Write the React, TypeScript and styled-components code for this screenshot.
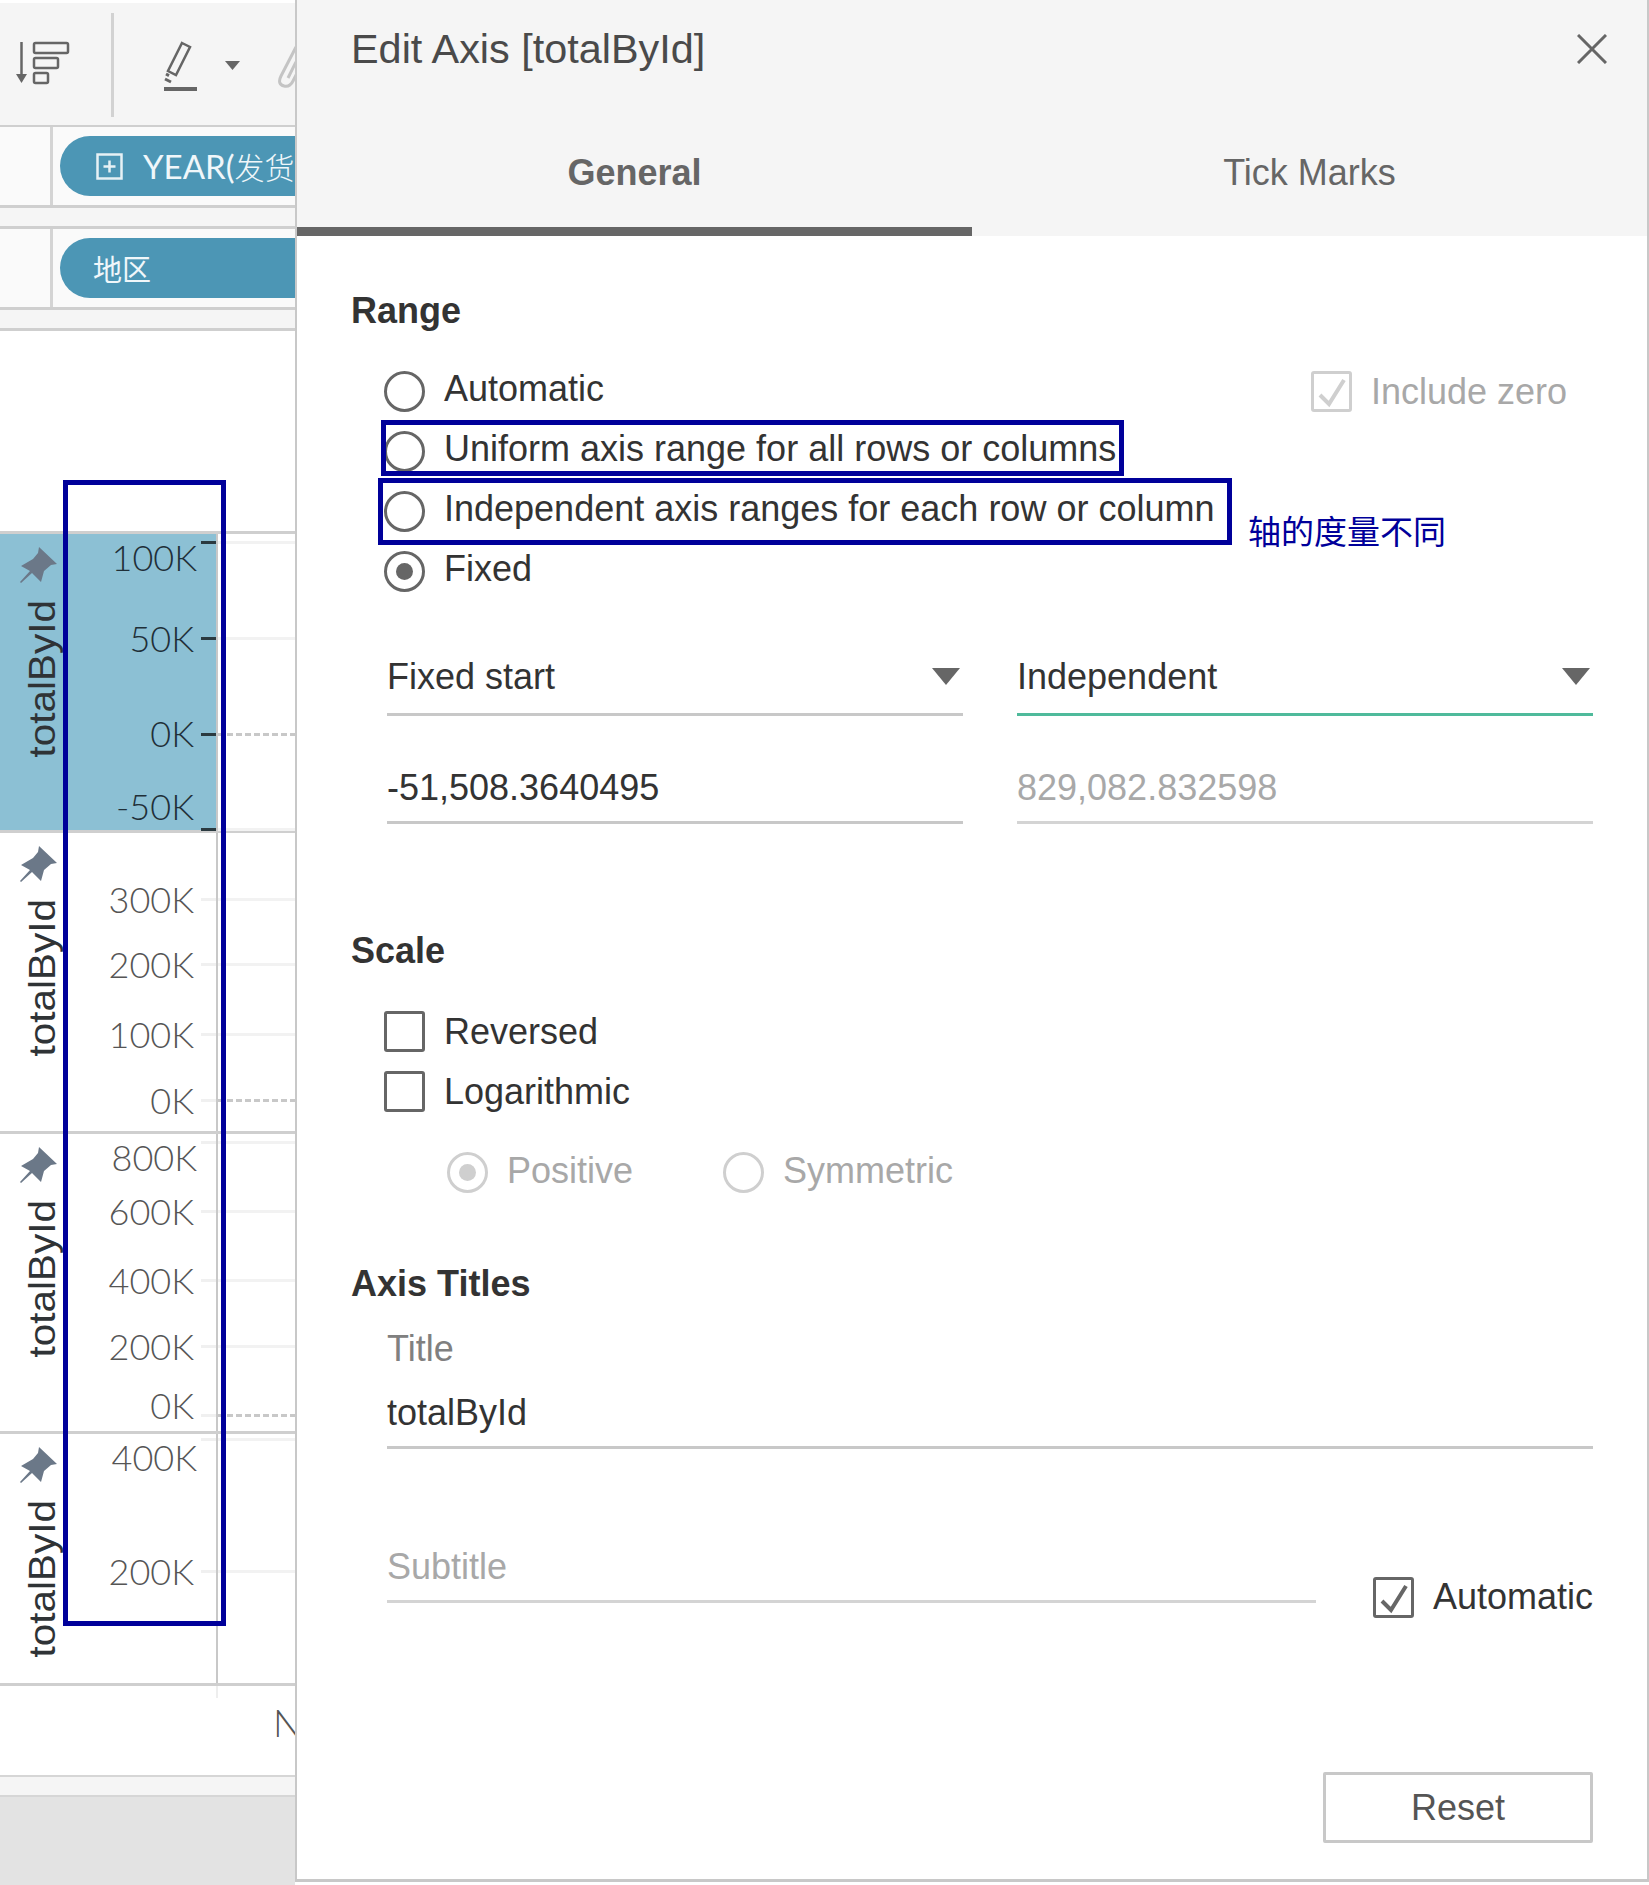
import React from "react";
import styled, { createGlobalStyle } from "styled-components";

const GlobalStyle = createGlobalStyle`
  html, body {
    margin: 0;
    padding: 0;
    background: white;
  }
  * {
    box-sizing: border-box;
  }
`;

const LINE = "#cfcfcf";
const NAVY = "#00009a";

const axisRows = [
  {
    height: 299,
    selected: true,
    ticks: [
      { label: "100K", center: 23, right: 98, line: 7 },
      { label: "50K", center: 104, right: 101, line: 103 },
      { label: "0K", center: 199, right: 101, line: 199, zero: true },
      { label: "-50K", center: 272, right: 101, line: 294 },
    ],
  },
  {
    height: 301,
    ticks: [
      { label: "300K", center: 66, right: 101, line: 65 },
      { label: "200K", center: 131, right: 101, line: 130 },
      { label: "100K", center: 201, right: 101, line: 200 },
      { label: "0K", center: 267, right: 101, line: 266, zero: true },
    ],
  },
  {
    height: 300,
    ticks: [
      { label: "800K", center: 23, right: 98, line: 7 },
      { label: "600K", center: 77, right: 101, line: 76 },
      { label: "400K", center: 146, right: 101, line: 145 },
      { label: "200K", center: 212, right: 101, line: 211 },
      { label: "0K", center: 271, right: 101, line: 280, zero: true },
    ],
  },
  {
    height: 252,
    ticks: [
      { label: "400K", center: 23, right: 98, line: 4 },
      { label: "200K", center: 137, right: 101, line: 136 },
    ],
  },
];

function SortIcon() {
  return (
    <ToolIcon width="52" height="122" viewBox="16 3 52 122">
      <path d="M21.5 42V78" stroke="#666" strokeWidth="2.5" />
      <path d="M16 74h11l-5.5 9z" fill="#666" />
      <g fill="none" stroke="#666" strokeWidth="2.5">
        <rect x="34" y="43" width="34" height="10" rx="1.5" />
        <rect x="34" y="58" width="24" height="10" rx="1.5" />
        <rect x="34" y="73" width="14" height="10" rx="1.5" />
      </g>
    </ToolIcon>
  );
}

function PencilIcon() {
  return (
    <ToolIcon width="33" height="122" viewBox="164 3 33 122">
      <path d="M182 43l8 4-14 28-8-4z" fill="none" stroke="#666" strokeWidth="2.5" />
      <path d="M166 74l3 1.6M165 79l6 3" stroke="#666" strokeWidth="3" />
      <path d="M164 89h33" stroke="#666" strokeWidth="4" />
    </ToolIcon>
  );
}

function CaretIcon() {
  return (
    <ToolIcon width="15" height="122" viewBox="225 3 15 122">
      <path d="M225 61h15l-7.5 9z" fill="#666" />
    </ToolIcon>
  );
}

function ClipIcon() {
  return (
    <ToolIcon width="30" height="122" viewBox="278 3 30 122">
      <path
        d="M296 47L281 76c-3 6-1 9 3 10 4 1 7-1 9-5l8-16M296 62l-8 16"
        fill="none"
        stroke="#c4c4c4"
        strokeWidth="3"
      />
    </ToolIcon>
  );
}

function PlusBox() {
  return (
    <svg width="27" height="27" viewBox="0 0 27 27">
      <rect x="1.5" y="1.5" width="24" height="24" fill="none" stroke="#e6f1f5" strokeWidth="2.5" />
      <path d="M13.5 7.5v12M7.5 13.5h12" stroke="#e6f1f5" strokeWidth="2.5" />
    </svg>
  );
}

function PinIcon() {
  return (
    <svg width="37" height="36" viewBox="0 0 37 36">
      <path
        d="M19 0L37 17l-6 1-7 6-3 11-9-9L1 36l-1-1 10-11-9-5 12-7 5-6z"
        fill="#6b7888"
      />
    </svg>
  );
}

function CheckMark({ color }: { color: string }) {
  return (
    <svg width="35" height="35" viewBox="0 0 35 35">
      <path d="M6 21l9 9L30 6" fill="none" stroke={color} strokeWidth="4" />
    </svg>
  );
}

function CloseIcon() {
  return (
    <svg width="30" height="30" viewBox="0 0 30 30">
      <path d="M1 1l28 28M29 1L1 29" stroke="#666" strokeWidth="3" />
    </svg>
  );
}

function AxisRowView({ row }: { row: (typeof axisRows)[number] }) {
  return (
    <AxisRow $selected={row.selected} style={{ height: row.height }}>
      <Gutter>
        <PinIcon />
        <AxisTitle>totalById</AxisTitle>
      </Gutter>
      {row.ticks.map((tick) => (
        <React.Fragment key={tick.label + tick.center}>
          <TickLabel
            $selected={row.selected}
            style={{ top: tick.center - 20, right: tick.right }}
          >
            {tick.label}
          </TickLabel>
          <TickMark $selected={row.selected} style={{ top: tick.line }} />
          <GridLine $zero={tick.zero} style={{ top: tick.line }} />
        </React.Fragment>
      ))}
    </AxisRow>
  );
}

export default function App() {
  return (
    <Page>
      <GlobalStyle />
      <LeftPane>
        <Toolbar>
          <SortIcon />
          <ToolDivider />
          <PencilIcon />
          <CaretIcon />
          <ClipIcon />
        </Toolbar>
        <ShelfRow>
          <ShelfLabel />
          <Pill $inset={36} $size={33}>
            <PlusBox />
            <span>
              YEAR(<PillCjk>发货</PillCjk>
            </span>
          </Pill>
        </ShelfRow>
        <ShelfBand />
        <ShelfRow>
          <ShelfLabel />
          <Pill $inset={33} $size={29}>
            地区
          </Pill>
        </ShelfRow>
        <ShelfBand />
        <ChartHead />
        {axisRows.map((row, i) => (
          <AxisRowView key={i} row={row} />
        ))}
        <DateRow>N</DateRow>
        <ScrollBand />
        <GreyFill />
        <AxisHighlight />
      </LeftPane>

      <Panel>
        <PanelHead>
          <TitleBar>
            <PanelTitle>Edit Axis [totalById]</PanelTitle>
            <CloseIcon />
          </TitleBar>
          <Tabs>
            <Tab $active>General</Tab>
            <Tab>Tick Marks</Tab>
          </Tabs>
        </PanelHead>

        <PanelBody>
          <RangeHeading>Range</RangeHeading>
          <OptionGroup>
            <OptionRow>
              <Option>
                <Radio />
                <OptionText $nudge={-2}>Automatic</OptionText>
              </Option>
              <Option $muted>
                <CheckBox $muted>
                  <CheckMark color="#cfcfcf" />
                </CheckBox>
                <OptionText $nudge={1}>Include zero</OptionText>
              </Option>
            </OptionRow>
            <OptionRow>
              <Option>
                <Radio />
                <OptionText $nudge={-2}>Uniform axis range for all rows or columns</OptionText>
              </Option>
              <Highlight $left={-3} $top={-1} $width={743} $height={56} />
            </OptionRow>
            <OptionRow>
              <Option>
                <Radio />
                <OptionText $nudge={-2}>Independent axis ranges for each row or column</OptionText>
              </Option>
              <Highlight $left={-6} $top={-3} $width={854} $height={67} />
              <Note>轴的度量不同</Note>
            </OptionRow>
            <OptionRow>
              <Option>
                <Radio $checked />
                <OptionText $nudge={-2}>Fixed</OptionText>
              </Option>
            </OptionRow>
          </OptionGroup>

          <FieldGrid>
            <SelectField>
              Fixed start
              <SelectArrow />
            </SelectField>
            <SelectField $focused>
              Independent
              <SelectArrow />
            </SelectField>
            <InputField>-51,508.3640495</InputField>
            <InputField $muted>829,082.832598</InputField>
          </FieldGrid>

          <ScaleHeading>Scale</ScaleHeading>
          <OptionGroup>
            <OptionRow>
              <Option>
                <CheckBox />
                <OptionText $nudge={1}>Reversed</OptionText>
              </Option>
            </OptionRow>
            <OptionRow>
              <Option>
                <CheckBox />
                <OptionText $nudge={1}>Logarithmic</OptionText>
              </Option>
            </OptionRow>
          </OptionGroup>
          <SubOptions>
            <SubOption $muted>
              <Radio $checked $muted />
              <OptionText $nudge={-1}>Positive</OptionText>
            </SubOption>
            <SubOption $muted>
              <Radio $muted />
              <OptionText $nudge={-1}>Symmetric</OptionText>
            </SubOption>
          </SubOptions>

          <TitlesHeading>Axis Titles</TitlesHeading>
          <TitleLabel>Title</TitleLabel>
          <TitleField>totalById</TitleField>
          <SubtitleRow>
            <SubtitleField>Subtitle</SubtitleField>
            <Option>
              <CheckBox>
                <CheckMark color="#666" />
              </CheckBox>
              <OptionText>Automatic</OptionText>
            </Option>
          </SubtitleRow>
          <ResetButton>Reset</ResetButton>
        </PanelBody>
      </Panel>
    </Page>
  );
}

const Page = styled.div`
  display: flex;
  width: 1649px;
  height: 1885px;
  overflow: hidden;
  font-family: "Liberation Sans", Arial, "Noto Sans CJK SC", sans-serif;
  font-size: 36px;
  color: #333;
`;

const LeftPane = styled.div`
  position: relative;
  display: flex;
  flex-direction: column;
  flex: none;
  width: 295px;
  height: 1885px;
  padding-top: 3px;
  overflow: hidden;
`;

const Toolbar = styled.div`
  display: flex;
  flex: none;
  height: 124px;
  padding-left: 16px;
  background: #f5f5f5;
  border-bottom: 2px solid ${LINE};
`;

const ToolIcon = styled.svg`
  flex: none;
  margin-right: 28px;
  overflow: visible;
  &:first-child {
    margin-right: 43px;
  }
  &:nth-child(4) {
    margin-right: 38px;
  }
`;

const ToolDivider = styled.div`
  flex: none;
  width: 3px;
  height: 104px;
  margin: 10px 50px 0 0;
  background: #d2d2d2;
`;

const ShelfRow = styled.div`
  display: flex;
  align-items: center;
  flex: none;
  height: 81px;
  background: #fafafa;
  border-bottom: 3px solid ${LINE};
`;

const ShelfLabel = styled.div`
  flex: none;
  align-self: stretch;
  width: 53px;
  border-right: 3px solid #d4d4d4;
`;

const Pill = styled.div<{ $inset: number; $size: number }>`
  display: flex;
  align-items: center;
  flex: none;
  gap: 20px;
  width: 300px;
  height: 60px;
  margin-left: 7px;
  padding-left: ${({ $inset }) => $inset}px;
  border-radius: 30px 0 0 30px;
  background: #4c96b5;
  color: #f0f7fa;
  font-family: Lato, "Noto Sans CJK SC", sans-serif;
  font-size: ${({ $size }) => $size}px;
  white-space: nowrap;
`;

const PillCjk = styled.span`
  font-size: 30px;
  font-weight: 300;
`;

const ShelfBand = styled.div`
  flex: none;
  height: 21px;
  background: #f5f5f5;
  border-bottom: 3px solid ${LINE};
`;

const ChartHead = styled.div`
  flex: none;
  height: 203px;
  background: white;
  border-bottom: 3px solid ${LINE};
`;

const AxisRow = styled.div<{ $selected?: boolean }>`
  position: relative;
  flex: none;
  background: ${({ $selected }) =>
    $selected
      ? "linear-gradient(to right, #8cc0d4 216px, white 216px)"
      : "white"};
  border-bottom: 3px solid ${LINE};
  &::after {
    content: "";
    position: absolute;
    left: 216px;
    top: 0;
    bottom: 0;
    width: 2px;
    background: #c8c8c8;
  }
`;

const Gutter = styled.div`
  display: flex;
  flex-direction: column;
  align-items: center;
  width: 77px;
  padding-top: 13px;
`;

const AxisTitle = styled.div`
  margin: 17px 0 0 6px;
  writing-mode: vertical-rl;
  transform: rotate(180deg) scaleX(0.9);
  font-size: 40.5px;
  line-height: 42px;
  color: #2f3336;
`;

const TickLabel = styled.div<{ $selected?: boolean }>`
  position: absolute;
  font-family: Lato, sans-serif;
  font-size: 36px;
  font-weight: 300;
  line-height: 40px;
  color: ${({ $selected }) => ($selected ? "#1f2f38" : "#555")};
`;

const TickMark = styled.div<{ $selected?: boolean }>`
  position: absolute;
  left: 201px;
  width: 15px;
  height: 3px;
  background: ${({ $selected }) => ($selected ? "#2b3a40" : "#f0f0f0")};
`;

const GridLine = styled.div<{ $zero?: boolean }>`
  position: absolute;
  left: 218px;
  right: 0;
  height: 3px;
  background: ${({ $zero }) =>
    $zero
      ? "repeating-linear-gradient(to right, #c8c8c8 0 6px, transparent 6px 9px)"
      : "#f2f2f2"};
`;

const DateRow = styled.div`
  position: relative;
  flex: none;
  height: 89px;
  padding-left: 273px;
  font-family: Lato, sans-serif;
  font-size: 38px;
  font-weight: 300;
  line-height: 72px;
  color: #555;
  &::before {
    content: "";
    position: absolute;
    left: 216px;
    top: 0;
    width: 2px;
    height: 12px;
    background: #eeeeee;
  }
`;

const ScrollBand = styled.div`
  flex: none;
  height: 22px;
  background: #f5f5f5;
  border-top: 2px solid #d6d6d6;
  border-bottom: 2px solid #d6d6d6;
`;

const GreyFill = styled.div`
  flex: 1;
  background: #e3e3e3;
`;

const AxisHighlight = styled.div`
  position: absolute;
  left: 63px;
  top: 480px;
  width: 163px;
  height: 1146px;
  border: 5px solid ${NAVY};
`;

const Panel = styled.div`
  display: flex;
  flex-direction: column;
  flex: none;
  width: 1354px;
  height: 1882px;
  background: white;
  border-left: 2px solid #c8c8c8;
  border-right: 2px solid #c8c8c8;
  border-bottom: 3px solid #c8c8c8;
`;

const PanelHead = styled.div`
  flex: none;
  background: #f5f5f5;
`;

const TitleBar = styled.div`
  display: flex;
  align-items: center;
  justify-content: space-between;
  height: 98px;
  padding: 0 40px 0 54px;
`;

const PanelTitle = styled.div`
  font-size: 41.4px;
  color: #4a4a4a;
`;

const Tabs = styled.div`
  display: flex;
  height: 138px;
`;

const Tab = styled.div<{ $active?: boolean }>`
  display: flex;
  align-items: center;
  justify-content: center;
  width: 675px;
  padding-top: 20px;
  color: #666;
  font-weight: ${({ $active }) => ($active ? "bold" : "normal")};
  border-bottom: 9px solid ${({ $active }) => ($active ? "#666" : "#f5f5f5")};
`;

const PanelBody = styled.div`
  display: flex;
  flex-direction: column;
  flex: 1;
  padding: 0 54px 0 54px;
`;

const Heading = styled.div`
  flex: none;
  height: 40px;
  font-weight: bold;
  line-height: 40px;
  color: #333;
`;

const RangeHeading = styled(Heading)`
  margin-top: 55px;
`;

const ScaleHeading = styled(Heading)`
  margin-top: 107px;
`;

const TitlesHeading = styled(Heading)`
  margin-top: 62px;
`;

const OptionGroup = styled.div`
  display: flex;
  flex-direction: column;
  flex: none;
  margin-top: 30px;
  padding-left: 33px;
`;

const OptionRow = styled.div`
  position: relative;
  display: flex;
  align-items: center;
  justify-content: space-between;
  height: 60px;
  padding-right: 26px;
`;

const Option = styled.div<{ $muted?: boolean }>`
  display: flex;
  align-items: center;
  gap: 19px;
  height: 60px;
  color: ${({ $muted }) => ($muted ? "#a8a8a8" : "#333")};
  white-space: nowrap;
`;

const OptionText = styled.span<{ $nudge?: number }>`
  margin-top: ${({ $nudge = 0 }) => ($nudge > 0 ? $nudge * 2 : 0)}px;
  margin-bottom: ${({ $nudge = 0 }) => ($nudge < 0 ? -$nudge * 2 : 0)}px;
`;

const Radio = styled.span<{ $checked?: boolean; $muted?: boolean }>`
  display: flex;
  align-items: center;
  justify-content: center;
  flex: none;
  width: 41px;
  height: 41px;
  border: 3px solid ${({ $muted }) => ($muted ? "#cfcfcf" : "#666")};
  border-radius: 50%;
  &::after {
    content: "";
    display: ${({ $checked }) => ($checked ? "block" : "none")};
    width: 17px;
    height: 17px;
    border-radius: 50%;
    background: ${({ $muted }) => ($muted ? "#cfcfcf" : "#666")};
  }
`;

const CheckBox = styled.span<{ $muted?: boolean }>`
  display: flex;
  align-items: center;
  justify-content: center;
  flex: none;
  width: 41px;
  height: 41px;
  border: 3px solid ${({ $muted }) => ($muted ? "#cfcfcf" : "#666")};
  border-radius: 3px;
`;

const Highlight = styled.div<{
  $left: number;
  $top: number;
  $width: number;
  $height: number;
}>`
  position: absolute;
  left: ${({ $left }) => $left}px;
  top: ${({ $top }) => $top}px;
  width: ${({ $width }) => $width}px;
  height: ${({ $height }) => $height}px;
  border: 5px solid ${NAVY};
`;

const Note = styled.div`
  position: absolute;
  left: 864px;
  top: 29px;
  font-family: "Noto Sans CJK SC", sans-serif;
  font-size: 33px;
  line-height: 40px;
  color: ${NAVY};
  white-space: nowrap;
`;

const FieldGrid = styled.div`
  display: grid;
  flex: none;
  grid-template-columns: 576px 576px;
  column-gap: 54px;
  row-gap: 32px;
  margin: 39px 0 0 36px;
`;

const SelectField = styled.div<{ $focused?: boolean }>`
  position: relative;
  display: flex;
  align-items: center;
  height: 76px;
  border-bottom: 3px solid ${({ $focused }) => ($focused ? "#4fba9b" : "#c8c8c8")};
`;

const SelectArrow = styled.span`
  position: absolute;
  right: 3px;
  top: 28px;
  width: 28px;
  height: 17px;
  background: #666;
  clip-path: polygon(0 0, 100% 0, 50% 100%);
`;

const InputField = styled.div<{ $muted?: boolean }>`
  display: flex;
  align-items: center;
  height: 76px;
  padding-top: 7px;
  color: ${({ $muted }) => ($muted ? "#a8a8a8" : "#333")};
  border-bottom: 3px solid ${({ $muted }) => ($muted ? "#d4d4d4" : "#c8c8c8")};
`;

const SubOptions = styled.div`
  display: flex;
  flex: none;
  margin: 21px 0 0 96px;
`;

const SubOption = styled(Option)`
  width: 276px;
`;

const TitleLabel = styled.div`
  flex: none;
  height: 40px;
  margin: 25px 0 0 36px;
  line-height: 40px;
  color: #808080;
`;

const TitleField = styled.div`
  display: flex;
  align-items: center;
  flex: none;
  height: 80px;
  margin-left: 36px;
  padding-top: 11px;
  border-bottom: 3px solid #c8c8c8;
`;

const SubtitleRow = styled.div`
  display: flex;
  align-items: flex-end;
  justify-content: space-between;
  flex: none;
  height: 100px;
  margin: 78px 0 0 36px;
`;

const SubtitleField = styled.div`
  display: flex;
  align-items: center;
  align-self: flex-start;
  width: 929px;
  height: 76px;
  padding-top: 7px;
  color: #a8a8a8;
  border-bottom: 3px solid #d4d4d4;
`;

const ResetButton = styled.div`
  display: flex;
  align-items: center;
  justify-content: center;
  align-self: flex-end;
  flex: none;
  width: 270px;
  height: 71px;
  margin-top: 145px;
  color: #555;
  border: 3px solid #c8c8c8;
  border-radius: 2px;
`;
